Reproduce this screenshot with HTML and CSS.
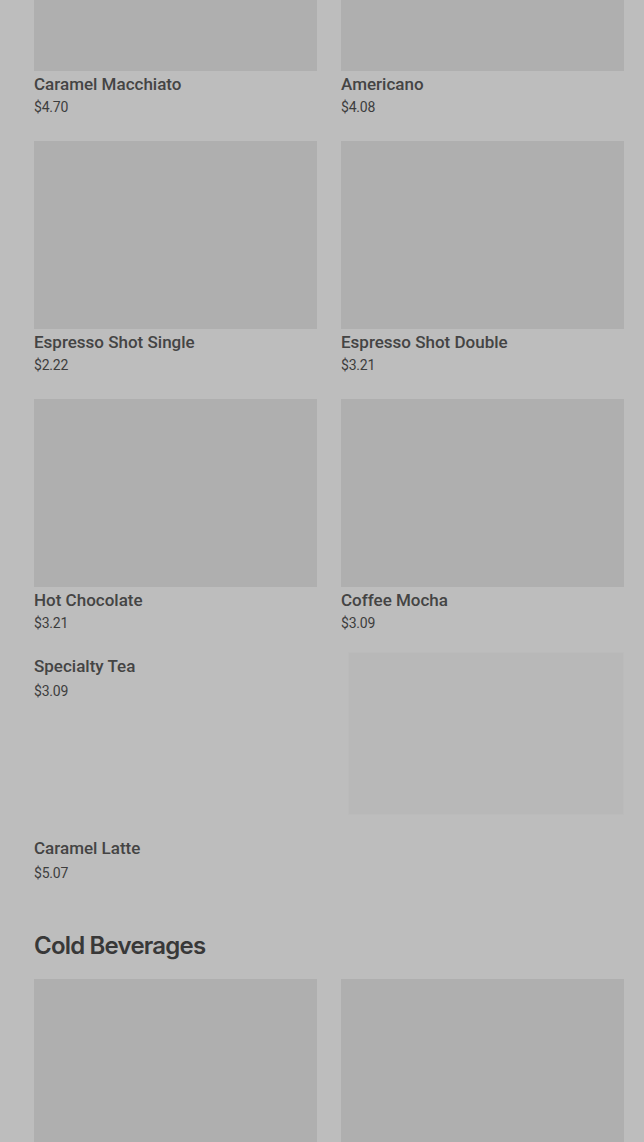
FILE: index.html
```html
<!DOCTYPE html>
<html lang="en">
<head>
<meta charset="utf-8">
<title>Menu</title>
<link rel="stylesheet" href="styles.css">
</head>
<body>
<main class="menu">
  <section class="category">
    <div class="grid">
      <div class="card"><div class="thumb"></div><div class="name">Caramel Macchiato</div><div class="price">$4.70</div></div>
      <div class="card"><div class="thumb"></div><div class="name">Americano</div><div class="price">$4.08</div></div>
      <div class="card"><div class="thumb"></div><div class="name">Espresso Shot Single</div><div class="price">$2.22</div></div>
      <div class="card"><div class="thumb"></div><div class="name">Espresso Shot Double</div><div class="price">$3.21</div></div>
      <div class="card"><div class="thumb"></div><div class="name">Hot Chocolate</div><div class="price">$3.21</div></div>
      <div class="card"><div class="thumb"></div><div class="name">Coffee Mocha</div><div class="price">$3.09</div></div>
    </div>
    <div class="list">
      <div class="row">
        <div class="info"><div class="name">Specialty Tea</div><div class="price lg">$3.09</div></div>
        <div class="row-thumb"></div>
      </div>
      <div class="row">
        <div class="info"><div class="name">Caramel Latte</div><div class="price lg">$5.07</div></div>
      </div>
    </div>
  </section>
  <section class="category">
    <h2 class="cat-title">Cold Beverages</h2>
    <div class="grid">
      <div class="card"><div class="thumb"></div></div>
      <div class="card"><div class="thumb"></div></div>
    </div>
  </section>
</main>
</body>
</html>
```
FILE: styles.css
```css
html, body {
  margin: 0;
  padding: 0;
  background: #bdbdbd;
  overflow: hidden;
}
body {
  font-family: Roboto, "Liberation Sans", sans-serif;
  color: #3b3b3b;
}
.menu {
  padding: 0 20px 0 34px;
  margin-top: -117px;
}
.grid {
  display: grid;
  grid-template-columns: 1fr 1fr;
  column-gap: 24px;
  row-gap: 24px;
}
.thumb {
  height: 188px;
  background: #afafaf;
  margin-bottom: 3px;
}
.name {
  font-size: 17px;
  font-weight: 500;
  line-height: 20px;
  color: #444444;
}
.price {
  font-size: 14px;
  line-height: 20px;
  margin-top: 3px;
  letter-spacing: -0.2px;
  color: #3d3d3d;
}
.price.lg {
  margin-top: 5px;
}
.list {
  margin-top: 19px;
  display: flex;
  flex-direction: column;
  gap: 19px;
}
.row {
  display: flex;
  justify-content: space-between;
  align-items: flex-start;
}
.info {
  padding-top: 4px;
}
.row-thumb {
  width: 274px;
  height: 161px;
  background: #b8b8b8;
  border: 1px solid #bbbbbb;
}
.category + .category {
  margin-top: 49px;
}
.cat-title {
  margin: 0 0 19px;
  font-family: Inter, "Liberation Sans", sans-serif;
  font-size: 24px;
  font-weight: 600;
  line-height: 28px;
  letter-spacing: -0.8px;
  color: #383838;
}
```
